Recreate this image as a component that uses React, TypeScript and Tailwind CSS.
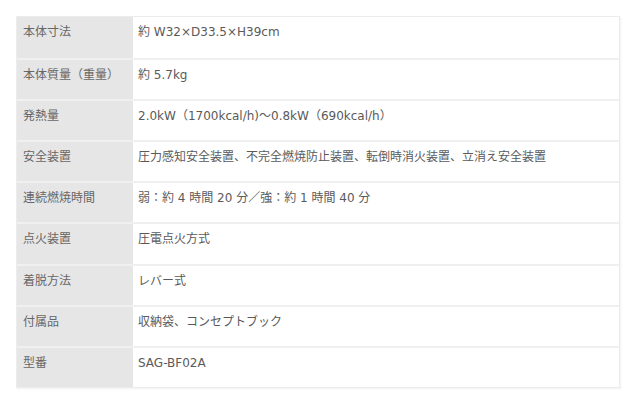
const SPECS: { label: string; value: string }[] = [
  { label: '本体寸法', value: '約 W32×D33.5×H39cm' },
  { label: '本体質量（重量）', value: '約 5.7kg' },
  { label: '発熱量', value: '2.0kW（1700kcal/h)～0.8kW（690kcal/h）' },
  {
    label: '安全装置',
    value: '圧力感知安全装置、不完全燃焼防止装置、転倒時消火装置、立消え安全装置',
  },
  { label: '連続燃焼時間', value: '弱：約 4 時間 20 分／強：約 1 時間 40 分' },
  { label: '点火装置', value: '圧電点火方式' },
  { label: '着脱方法', value: 'レバー式' },
  { label: '付属品', value: '収納袋、コンセプトブック' },
  { label: '型番', value: 'SAG-BF02A' },
]

export default function App() {
  return (
    <div
      className="w-[640px] h-[409px] bg-white pt-[16px] pl-[16px]"
      style={{ fontFamily: '"DejaVu Sans", "Noto Sans CJK JP", sans-serif' }}
    >
      <div className="w-[604px] border border-[#ececec] shadow-[1px_1px_2px_rgba(0,0,0,0.06)]">
        {SPECS.map((row, i) => (
          <div
            key={row.label}
            className={
              'flex h-[41.1px] text-[12px] leading-[16px] ' +
              (i > 0 ? 'border-t-2 border-[#f0f0f0]' : '')
            }
          >
            <div className="w-[116px] shrink-0 bg-[#e6e6e6] pl-[6px] pt-[7px] text-[#666666]">
              {row.label}
            </div>
            <div className="flex-1 pl-[5px] pt-[7px] text-[#5a5a5a]">{row.value}</div>
          </div>
        ))}
      </div>
    </div>
  )
}
